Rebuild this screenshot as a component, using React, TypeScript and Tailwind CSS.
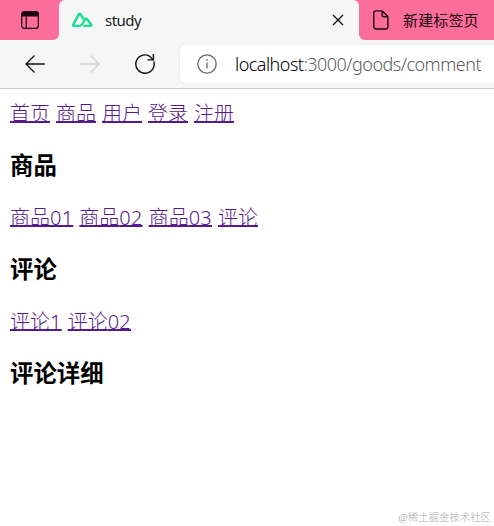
import type { ReactNode } from 'react'

const NuxtLogo = () => (
  <svg className="w-[22px] h-4 shrink-0" viewBox="0 0 22 16" fill="none" stroke="#18df91" strokeWidth="2.4" strokeLinejoin="round" strokeLinecap="round">
    <path d="M11.2 6.6L8.5 2.1c-.4-.7-1.2-.7-1.6 0L1.3 12.3c-.5.8-.1 1.6.9 1.6h5c1.4 0 2.2-.4 2.9-1.5l3.2-5.4c.4-.7 1.1-.7 1.5 0l4.4 5.5c.5.7.1 1.4-.6 1.4H12.4" />
  </svg>
)

const TabActionsIcon = () => (
  <svg className="w-[18px] h-[18px]" viewBox="0 0 18 18" fill="none" stroke="#1c080e" strokeWidth="1.2">
    <rect x="0.7" y="0.7" width="16.6" height="16.6" rx="2.6" />
    <path d="M1 5V3.2C1 1.8 1.8 1 3.2 1h11.6C16.2 1 17 1.8 17 3.2V5z" fill="#1c080e" />
    <path d="M5.2 5v12" />
  </svg>
)

const PageIcon = () => (
  <svg className="w-4 h-5 shrink-0" viewBox="0 0 16 20" fill="none" stroke="#1c080e" strokeWidth="1.4" strokeLinejoin="round">
    <path d="M3 .9h6.2l5.7 5.7v10.2a2.2 2.2 0 0 1-2.2 2.2H3a2.2 2.2 0 0 1-2.2-2.2V3.1A2.2 2.2 0 0 1 3 .9z" />
    <path d="M9.1 1v4.2c0 .9.6 1.5 1.5 1.5h4.2" />
  </svg>
)

const ArrowIcon = ({ className }: { className: string }) => (
  <svg className={className} viewBox="0 0 20 18" fill="none" stroke="currentColor" strokeWidth="1.3">
    <path d="M19.8 9H1M9.5.5L1 9l8.5 8.5" />
  </svg>
)

const ReloadIcon = () => (
  <svg className="w-5 h-5" viewBox="0 0 20 20" fill="none" stroke="#111" strokeWidth="1.4">
    <path d="M18.8 7.4A9.2 9.2 0 1 1 14 1.8L18.2 5.8" />
    <path d="M18.4 0v5.9h-6" />
  </svg>
)

const InfoIcon = () => (
  <svg className="w-5 h-5 shrink-0" viewBox="0 0 20 20" fill="none" stroke="#696969" strokeWidth="1.3">
    <circle cx="10" cy="10" r="9.2" />
    <path d="M10 8.5v6" />
    <circle cx="10" cy="5.8" r="0.9" fill="#696969" stroke="none" />
  </svg>
)

const Title = ({ children }: { children: ReactNode }) => (
  <h3 className="my-[21px] h-[31px] text-[23.4px] leading-[31px] font-bold text-black">{children}</h3>
)

const Links = ({ items }: { items: string[] }) => (
  <nav className="flex h-[31px] gap-[6px] text-[20px] leading-[31px] font-light text-[#551a8b]">
    {items.map((item) => (
      <a
        key={item}
        href="#"
        className="whitespace-nowrap underline decoration-[1.5px] underline-offset-[0px] [text-decoration-skip-ink:none]"
      >
        {item.replace(/\d+/, '')}
        <span className="tracking-[0.25px]">{item.match(/\d+/)?.[0]}</span>
      </a>
    ))}
  </nav>
)

const TabBar = () => (
  <div className="flex h-10 bg-[#f6f6f6]">
    <div className="flex w-[59px] items-center rounded-br-[6px] bg-[#fc6d9b] pl-[21px]">
      <TabActionsIcon />
    </div>
    <div className="w-[300px] bg-[#fc6d9b]">
      <div className="flex h-full items-center rounded-t-[6px] bg-[#f6f6f6] pr-[15px] pl-[13px]">
        <NuxtLogo />
        <span className="ml-[11px] text-[15px] leading-5 tracking-[-0.5px] text-[#1b1b1b]">study</span>
        <svg className="ml-auto w-3 h-3" viewBox="0 0 12 12" stroke="#111" strokeWidth="1.4">
          <path d="M1 1l10 10M11 1L1 11" />
        </svg>
      </div>
    </div>
    <div className="flex flex-1 items-center overflow-hidden rounded-bl-[6px] bg-[#fc6d9b] pl-[14px]">
      <PageIcon />
      <span className="ml-[14px] whitespace-nowrap text-[15px] leading-5 tracking-[0.15px] text-[#1c080e]">新建标签页</span>
    </div>
  </div>
)

const Toolbar = () => (
  <div className="flex h-[49px] items-center border-b border-[#c9c9c9] bg-[#f6f6f6] pl-[25px]">
    <ArrowIcon className="h-[18px] w-5 text-[#111]" />
    <ArrowIcon className="ml-[35px] h-[18px] w-5 rotate-180 text-[#cfcfcf]" />
    <div className="ml-[35px]">
      <ReloadIcon />
    </div>
    <div className="ml-[25px] flex h-[38px] flex-1 items-center rounded-l-[5px] bg-white pl-[17px] shadow-[0_0_2px_rgba(0,0,0,0.12)]">
      <InfoIcon />
      <span className="ml-[18px] whitespace-nowrap text-[18px] leading-7 font-light tracking-[-0.52px] text-[#606060]">
        <span className="text-black">localhost</span>:3000/goods/comment
      </span>
    </div>
  </div>
)

const App = () => {
  return (
    <div className="relative h-[526px] w-[494px] overflow-hidden bg-white font-['Noto_Sans','Noto_Sans_CJK_SC',sans-serif]">
      <TabBar />
      <Toolbar />
      <main className="px-[10px] pt-[9px]">
        <Links items={['首页', '商品', '用户', '登录', '注册']} />
        <Title>商品</Title>
        <Links items={['商品01', '商品02', '商品03', '评论']} />
        <Title>评论</Title>
        <Links items={['评论1', '评论02']} />
        <Title>评论详细</Title>
      </main>
      {/* Watermark */}
      <span className="absolute right-[3px] bottom-0 whitespace-nowrap font-['Liberation_Serif','Noto_Sans_CJK_SC',serif] text-[10.4px] leading-4 font-light text-[#aaa]">
        @稀土掘金技术社区
      </span>
    </div>
  )
}

export default App
